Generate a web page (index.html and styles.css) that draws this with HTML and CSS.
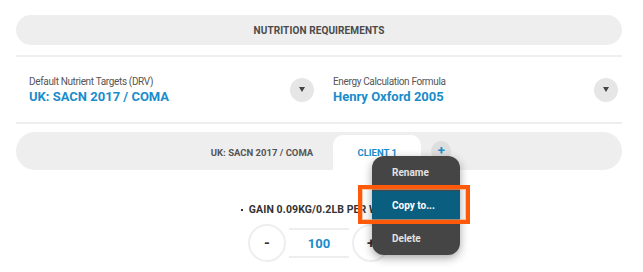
FILE: index.html
```html
<!DOCTYPE html>
<html>
  <head>
    <title>Nutrition requirements</title>
    <link rel="stylesheet" href="styles.css">
  </head>
  <body>
    <div class="page">
      <div class="title-bar">NUTRITION REQUIREMENTS</div>

      <div class="selectors">
        <div class="selector">
          <div class="selector-text">
            <div class="selector-label">Default Nutrient Targets (DRV)</div>
            <div class="selector-value">UK: SACN 2017 / COMA</div>
          </div>
          <button class="drop-btn"><span class="caret"></span></button>
        </div>
        <div class="selector">
          <div class="selector-text">
            <div class="selector-label">Energy Calculation Formula</div>
            <div class="selector-value">Henry Oxford 2005</div>
          </div>
          <button class="drop-btn"><span class="caret"></span></button>
        </div>
      </div>

      <div class="tabs">
        <div class="tab">UK: SACN 2017 / COMA</div>
        <div class="tab active">CLIENT 1</div>
        <button class="add-btn">+</button>
      </div>

      <div class="goal"><span class="dot"></span>GAIN 0.09KG/0.2LB PER WEEK</div>

      <div class="stepper">
        <button class="step-btn">-</button>
        <div class="step-value">100</div>
        <button class="step-btn">+</button>
      </div>
    </div>

    <ul class="menu">
      <li>Rename</li>
      <li class="selected">Copy to...</li>
      <li>Delete</li>
    </ul>
    <div class="highlight"></div>
  </body>
</html>
```

FILE: styles.css
```css
body { margin: 0; background: #fff; font-family: Roboto, "Liberation Sans", Arial, sans-serif; }

.page { padding: 15px 21px 0 16px; }

.title-bar { height: 30px; border-radius: 15px; background: #eeeeee; display: flex; align-items: center; justify-content: center; font-size: 10px; font-weight: bold; color: #4a4a4a; letter-spacing: 0.1px; }

.selectors { margin-top: 10px; border-top: 2px solid #eeeeee; border-bottom: 2px solid #eeeeee; height: 65px; display: flex; }
.selector { flex: 1; display: flex; align-items: center; padding: 0 4px 0 13px; }
.selector + .selector { padding-left: 15px; }
.selector-text { flex: 1; padding-top: 3px; }
.selector-label { font-size: 10px; color: #555; letter-spacing: -0.35px; line-height: 12px; }
.selector-value { font-size: 13px; font-weight: bold; color: #1a8ccb; line-height: 18px; margin-top: 0; }
.drop-btn { width: 24px; height: 24px; border-radius: 50%; border: none; background: #e6e6e6; padding: 0; display: flex; align-items: center; justify-content: center; }
.caret { width: 0; height: 0; border-left: 3px solid transparent; border-right: 3px solid transparent; border-top: 5px solid #444; }

.tabs { margin-top: 8px; height: 38px; border-radius: 19px; background: #eeeeee; display: flex; justify-content: center; align-items: flex-end; padding-left: 4px; box-sizing: border-box; }
.tab { height: 35px; display: flex; align-items: center; justify-content: center; padding: 0 20px; font-size: 9.5px; font-weight: bold; color: #555; letter-spacing: 0; }
.tab.active { background: #fff; color: #1a8ccb; width: 88px; padding: 0; border-radius: 10px 10px 0 0; }
.add-btn { align-self: center; margin-left: 10px; width: 20px; height: 20px; border-radius: 50%; border: none; background: #dedede; color: #1a8ccb; font-weight: bold; font-size: 13px; padding: 0; line-height: 20px; font-family: Roboto, sans-serif; }

.goal { margin-top: 34px; text-align: center; font-size: 10.5px; font-weight: bold; color: #333; letter-spacing: 0.1px; line-height: 12px; }
.dot { display: inline-block; width: 2px; height: 2px; background: #333; vertical-align: middle; margin-right: 6px; }

.stepper { margin-top: 8px; display: flex; justify-content: center; align-items: center; }
.step-btn { width: 38px; height: 38px; border-radius: 50%; border: 2px solid #eeeeee; background: #fff; font-size: 15px; font-weight: bold; color: #333; padding: 0; font-family: Roboto, sans-serif; }
.step-value { width: 60px; height: 26px; margin: 0 3px; border-top: 2px solid #eeeeee; border-bottom: 2px solid #eeeeee; display: flex; align-items: center; justify-content: center; font-size: 13px; font-weight: bold; color: #1a8ccb; }

.menu { position: absolute; left: 372px; top: 156px; width: 88px; margin: 0; padding: 2px 0; list-style: none; background: #454545; border-radius: 12px; box-shadow: 0 3px 10px rgba(0, 0, 0, 0.35); display: flex; flex-direction: column; gap: 4px; }
.menu li { height: 29px; line-height: 29px; padding-left: 20px; font-size: 10px; font-weight: bold; color: #e2e2e2; }
.menu li.selected { background: #0a5e80; color: #fff; }

.highlight { position: absolute; left: 358px; top: 185px; width: 104px; height: 31px; border: 4px solid #ff5a0a; box-shadow: inset 0 0 0 1px rgba(255, 160, 110, 0.6); }
```
